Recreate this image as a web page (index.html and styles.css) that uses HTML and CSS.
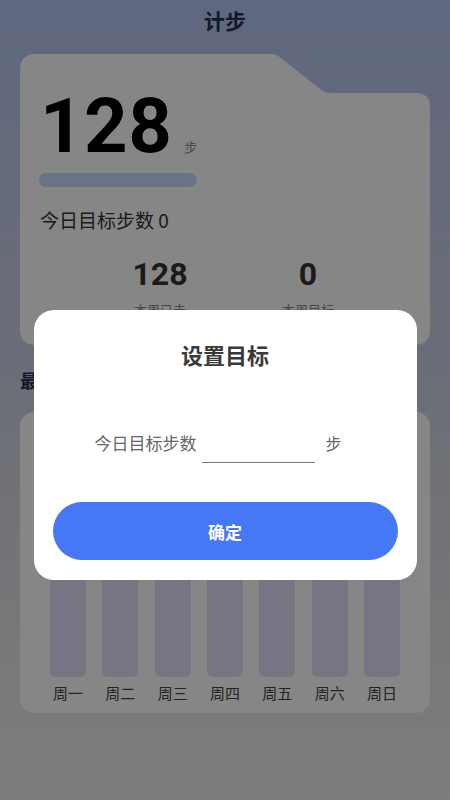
FILE: index.html
```html
<!DOCTYPE html>
<html lang="zh-CN">
<head>
<meta charset="utf-8">
<title>计步</title>
<link rel="stylesheet" href="styles.css">
</head>
<body>
<div class="page">
  <header class="topbar">计步</header>

  <section class="card">
    <div class="today">
      <span class="big-num">128</span>
      <span class="big-unit">步</span>
    </div>
    <div class="progress"><div class="progress-fill"></div></div>
    <div class="goal-line">今日目标步数 0</div>
    <div class="stats">
      <div class="stat">
        <div class="stat-num">128</div>
        <div class="stat-label">本周已走</div>
      </div>
      <div class="stat">
        <div class="stat-num">0</div>
        <div class="stat-label">本周目标</div>
      </div>
    </div>
  </section>

  <h2 class="section-title">最近七天</h2>

  <section class="chart">
    <div class="bars">
      <div class="bar-col"><div class="bar"></div><span class="day">周一</span></div>
      <div class="bar-col"><div class="bar"></div><span class="day">周二</span></div>
      <div class="bar-col"><div class="bar"></div><span class="day">周三</span></div>
      <div class="bar-col"><div class="bar"></div><span class="day">周四</span></div>
      <div class="bar-col"><div class="bar"></div><span class="day">周五</span></div>
      <div class="bar-col"><div class="bar"></div><span class="day">周六</span></div>
      <div class="bar-col"><div class="bar"></div><span class="day">周日</span></div>
    </div>
  </section>
</div>

<div class="overlay">
  <div class="modal">
    <div class="modal-title">设置目标</div>
    <div class="input-row">
      <span class="input-label">今日目标步数</span>
      <span class="input-field"></span>
      <span class="input-unit">步</span>
    </div>
    <button class="confirm">确定</button>
  </div>
</div>
</body>
</html>
```

FILE: styles.css
```css
* { box-sizing: border-box; }

html, body {
  margin: 0;
  padding: 0;
}

body {
  width: 450px;
  height: 800px;
  overflow: hidden;
  font-family: Roboto, "Noto Sans CJK SC", sans-serif;
  background: linear-gradient(180deg, #b5c4f1 0%, #c9cfe0 45%, #e2e2e4 80%, #ececec 100%);
  color: #333;
}

.page {
  padding: 0 20px;
}

.topbar {
  height: 40px;
  line-height: 40px;
  text-align: center;
  font-family: "Noto Sans CJK SC", sans-serif;
  font-size: 21px;
  font-weight: 700;
  color: #22304f;
}

.card {
  margin-top: 14px;
  height: 291px;
  background: #fefefe;
  clip-path: path("M0,16 Q0,0 16,0 H250 Q256,0 261,4 L300,35 Q305,39 311,39 H396 Q410,39 410,53 V275 Q410,291 394,291 H16 Q0,291 0,275 Z");
  padding: 34px 20px 0 20px;
}

.today {
  display: flex;
  align-items: baseline;
  height: 76px;
}

.big-num {
  font-family: Roboto, sans-serif;
  font-size: 76px;
  line-height: 76px;
  font-weight: 700;
  color: #000;
  letter-spacing: 0.5px;
}

.big-unit {
  font-family: "Noto Sans CJK SC", sans-serif;
  font-size: 13px;
  color: #8a8a8a;
  margin-left: 12px;
}

.progress {
  margin-top: 9px;
  margin-left: -1px;
  width: 158px;
  height: 14px;
  border-radius: 7px;
  background: #c8dbff;
}

.progress-fill {
  width: 0;
  height: 100%;
}

.goal-line {
  margin-top: 20px;
  font-family: "Noto Sans CJK SC", sans-serif;
  font-size: 19px;
  line-height: 26px;
  color: #333;
}

.stats {
  margin-top: 21px;
  display: grid;
  grid-template-columns: 148px 148px;
  padding-left: 46px;
}

.stat {
  text-align: center;
}

.stat-num {
  font-family: Roboto, sans-serif;
  font-size: 32px;
  line-height: 40px;
  font-weight: 700;
  color: #333;
}

.stat-label {
  margin-top: 6px;
  font-family: "Noto Sans CJK SC", sans-serif;
  font-size: 13px;
  color: #888;
}

.section-title {
  margin: 22px 0 0 0;
  font-family: "Noto Sans CJK SC", sans-serif;
  font-size: 18px;
  line-height: 26px;
  font-weight: 700;
  color: #22304f;
}

.chart {
  margin-top: 19px;
  height: 301px;
  background: #fdfdfd;
  border-radius: 14px;
  padding: 20px 30px 0 30px;
}

.bars {
  display: flex;
  justify-content: space-between;
}

.bar-col {
  display: flex;
  flex-direction: column;
  align-items: center;
  width: 36px;
}

.bar {
  width: 36px;
  height: 245px;
  border-radius: 6px;
  background: #e0defa;
}

.day {
  margin-top: 6px;
  font-family: "Noto Sans CJK SC", sans-serif;
  font-size: 15px;
  line-height: 20px;
  color: #444;
  white-space: nowrap;
}

.overlay {
  position: fixed;
  inset: 0;
  background: rgba(0, 0, 0, 0.47);
  display: flex;
  flex-direction: column;
  align-items: center;
  padding-top: 310px;
}

.modal {
  width: 383px;
  height: 270px;
  background: #fff;
  border-radius: 20px;
  padding: 30px 19px 0 19px;
  display: flex;
  flex-direction: column;
}

.modal-title {
  text-align: center;
  font-family: "Noto Sans CJK SC", sans-serif;
  font-size: 22px;
  line-height: 28px;
  font-weight: 700;
  color: #3a3a3a;
}

.input-row {
  margin-top: 54px;
  display: flex;
  align-items: center;
  height: 41px;
  padding-left: 42px;
}

.input-label {
  font-family: "Noto Sans CJK SC", sans-serif;
  font-size: 17px;
  color: #666;
}

.input-field {
  width: 113px;
  height: 41px;
  margin-left: 5px;
  border-bottom: 1.5px solid #777;
}

.input-unit {
  margin-left: 11px;
  font-family: "Noto Sans CJK SC", sans-serif;
  font-size: 16px;
  color: #666;
}

.confirm {
  margin-top: 39px;
  height: 58px;
  border: none;
  border-radius: 29px;
  background: #4677f5;
  color: #fff;
  font-family: "Noto Sans CJK SC", sans-serif;
  font-size: 17px;
  font-weight: 700;
  cursor: pointer;
}
```
